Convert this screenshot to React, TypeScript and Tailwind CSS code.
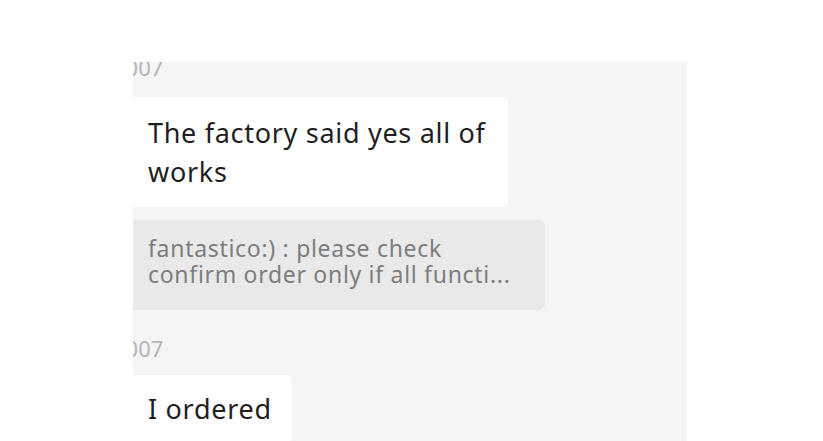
const font = { fontFamily: '"Noto Sans", "Open Sans", sans-serif' };

export default function App() {
  return (
    <div className="w-[823px] h-[441px] bg-white overflow-hidden" style={font}>
      <div className="ml-[133px] mt-[62px] w-[554px] h-[379px] bg-[#f5f5f5] overflow-hidden">
        {/* time stamp, cut at the panel edge */}
        <div className="-ml-[20px] -mt-[7px] h-[42px] text-[22px] leading-[24px] text-[#b4b4b4]">2007</div>

        <div className="w-[375px] rounded-r-md bg-white pl-[15px] pr-4 pt-[16px] pb-[16px] text-[27px] leading-[39px] tracking-[0.7px] text-[#1f1f1f]">
          The factory said yes all of works
        </div>

        <div className="mt-[13px] w-[412px] rounded-r-md bg-[#e9e9e9] pl-[15px] pr-3 pt-[15px] pb-[23px] text-[23px] leading-[26px] tracking-[0.7px] text-[#7d7d7d]">
          <div>fantastico:) : please check</div>
          <div className="whitespace-nowrap">confirm order only if all functi...</div>
        </div>

        <div className="mt-[26px] -ml-[20px] h-[39px] text-[22px] leading-[24px] text-[#b4b4b4]">2007</div>

        <div className="w-[159px] rounded-r-md bg-white pl-[15px] pt-[14px] pb-4 text-[27px] leading-[39px] tracking-[0.7px] text-[#1f1f1f]">
          I ordered
        </div>
      </div>
    </div>
  );
}
